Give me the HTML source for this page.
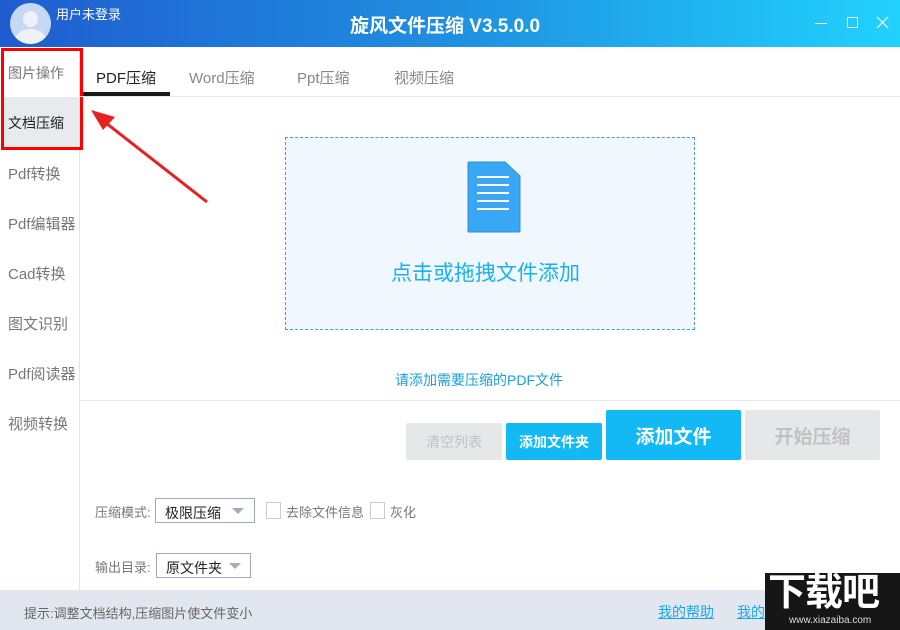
<!DOCTYPE html>
<html><head><meta charset="utf-8"><style>
*{margin:0;padding:0;box-sizing:border-box}
body{width:900px;height:630px;position:relative;overflow:hidden;background:#fff;font-family:"Liberation Sans","Noto Sans CJK SC",sans-serif}
.a{position:absolute;white-space:nowrap}
.title{left:0;top:0;width:900px;height:47px;background:linear-gradient(90deg,#1f5ccf 0%,#1f8fe0 50%,#21d2fd 100%)}
.side div{position:absolute;left:8px;font-size:15px;color:#777;white-space:nowrap}
.btn{position:absolute;display:flex;align-items:center;justify-content:center;border-radius:2px;font-weight:bold;white-space:nowrap}
</style></head><body>
<div class="a title"></div>
<div class="a" style="left:10px;top:3px;width:41px;height:41px;border-radius:50%;background:#c5d8f5;overflow:hidden">
<div class="a" style="left:13px;top:8px;width:15px;height:16px;border-radius:50%;background:#eef2f7"></div>
<div class="a" style="left:5px;top:26px;width:31px;height:22px;border-radius:50%;background:#eef2f7"></div></div>
<div class="a" style="left:56px;top:4px;font-size:13px;color:#fff">用户未登录</div>
<div class="a" style="left:350px;top:11px;font-size:19px;color:#fff;font-weight:bold">旋风文件压缩 V3.5.0.0</div>
<div class="a" style="left:815px;top:23px;width:12px;height:1px;background:#fff"></div>
<div class="a" style="left:847px;top:17px;width:11px;height:11px;border:1px solid #fff"></div>
<svg class="a" style="left:876px;top:16px" width="13" height="13"><path d="M1 1L12 12M12 1L1 12" stroke="#fff" stroke-width="1.2"/></svg>
<div class="a" style="left:79px;top:47px;width:1px;height:543px;background:#e4e4e4"></div>
<div class="a" style="left:3px;top:97px;width:77px;height:50px;background:#e8eaed"></div>
<div class="a side" style="left:0;top:0">
<div style="top:63px;font-size:14px">图片操作</div>
<div style="top:113px;font-size:14px;color:#222">文档压缩</div>
<div style="top:163px">Pdf转换</div>
<div style="top:213px">Pdf编辑器</div>
<div style="top:263px">Cad转换</div>
<div style="top:313px">图文识别</div>
<div style="top:363px">Pdf阅读器</div>
<div style="top:413px">视频转换</div>
</div>
<div class="a" style="left:1px;top:48px;width:82px;height:102px;border:3px solid #f00"></div>
<div class="a" style="left:80px;top:96px;width:820px;height:1px;background:#e8e8e8"></div>
<div class="a" style="left:83px;top:92px;width:87px;height:4px;background:#1a1a1a"></div>
<div class="a" style="left:96px;top:67px;font-size:15px;color:#222">PDF压缩</div>
<div class="a" style="left:189px;top:67px;font-size:15px;color:#888">Word压缩</div>
<div class="a" style="left:297px;top:67px;font-size:15px;color:#888">Ppt压缩</div>
<div class="a" style="left:394px;top:67px;font-size:15px;color:#888">视频压缩</div>
<svg class="a" style="left:85px;top:100px" width="130" height="110"><path d="M122 102L12 16" stroke="#e82020" stroke-width="3"/><path d="M6 10L30 17L18 30Z" fill="#e82020"/></svg>
<div class="a" style="left:285px;top:137px;width:410px;height:193px;background:#f0f7fe;border:1px dashed #4a9dc9"></div>
<svg class="a" style="left:467px;top:161px" width="54" height="72"><path d="M1 2Q1 1 2 1H38L53 15V70Q53 71 52 71H2Q1 71 1 70Z" fill="#3aa7f5" stroke="#2e90d0"/><g stroke="#fff" stroke-width="2"><path d="M10 16H42M10 24H42M10 32H42M10 40H42M10 48H42"/></g></svg>
<div class="a" style="left:391px;top:257px;font-size:21px;color:#18b2ed">点击或拖拽文件添加</div>
<div class="a" style="left:395px;top:370px;font-size:14px;color:#18a0d8">请添加需要压缩的PDF文件</div>
<div class="a" style="left:80px;top:400px;width:820px;height:1px;background:#e6e6e6"></div>
<div class="btn" style="left:406px;top:423px;width:96px;height:37px;background:#e6e7e9;color:#c2c2c2;font-size:14px;font-weight:normal">清空列表</div>
<div class="btn" style="left:506px;top:423px;width:96px;height:37px;background:#13b9f5;color:#fff;font-size:14px">添加文件夹</div>
<div class="btn" style="left:606px;top:410px;width:135px;height:50px;background:#13b9f5;color:#fff;font-size:19px">添加文件</div>
<div class="btn" style="left:745px;top:410px;width:135px;height:50px;background:#e6e7e9;color:#c2c2c2;font-size:19px">开始压缩</div>
<div class="a" style="left:95px;top:502px;font-size:13px;color:#777">压缩模式:</div>
<div class="a" style="left:155px;top:498px;width:100px;height:25px;border:1px solid #9aaac0;font-size:14px;color:#222;padding:4px 0 0 9px">极限压缩</div>
<svg class="a" style="left:232px;top:508px" width="12" height="7"><path d="M0 0H12L6 6Z" fill="#aab"/></svg>
<div class="a" style="left:266px;top:502px;width:15px;height:17px;border:1px solid #ccc"></div>
<div class="a" style="left:286px;top:502px;font-size:13px;color:#777">去除文件信息</div>
<div class="a" style="left:370px;top:502px;width:15px;height:17px;border:1px solid #ccc"></div>
<div class="a" style="left:390px;top:502px;font-size:13px;color:#777">灰化</div>
<div class="a" style="left:95px;top:557px;font-size:13px;color:#777">输出目录:</div>
<div class="a" style="left:156px;top:553px;width:95px;height:25px;border:1px solid #9aaac0;font-size:14px;color:#222;padding:4px 0 0 9px">原文件夹</div>
<svg class="a" style="left:229px;top:563px" width="12" height="7"><path d="M0 0H12L6 6Z" fill="#aab"/></svg>
<div class="a" style="left:0;top:590px;width:900px;height:40px;background:#e2e6ee"></div>
<div class="a" style="left:24px;top:603px;font-size:13px;color:#666">提示:调整文档结构,压缩图片使文件变小</div>
<div class="a" style="left:658px;top:602px;font-size:14px;color:#1aa6f0;text-decoration:underline">我的帮助</div>
<div class="a" style="left:737px;top:602px;font-size:14px;color:#1aa6f0;text-decoration:underline">我的</div>
<div class="a" style="left:765px;top:573px;width:135px;height:57px;background:#161616"></div>
<div class="a" style="left:768px;top:572px;font-size:38px;font-weight:bold;color:#fff;letter-spacing:-1px;line-height:42px">下载吧</div>
<div class="a" style="left:789px;top:615px;font-size:10px;color:#ddd">www.xiazaiba.com</div>
</body></html>
